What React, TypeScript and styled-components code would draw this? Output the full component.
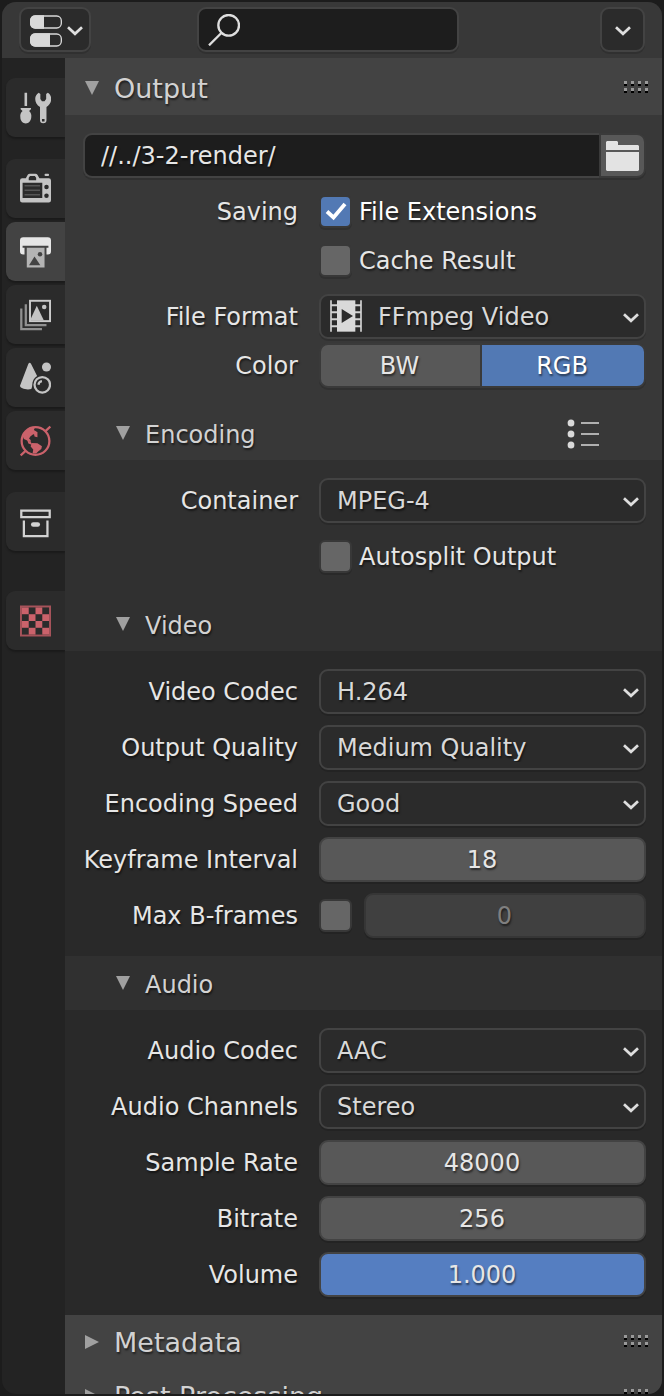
import React, { useId, useState } from "react";
import styled, { createGlobalStyle, css } from "styled-components";

const color = {
  frame: "#1c1c1c",
  nav: "#232323",
  bar: "#383838",
  panelHead: "#434343",
  level1: "#383838",
  level2: "#303030",
  level3: "#292929",
  border: "#434343",
  menu: "#2b2b2b",
  field: "#1d1d1d",
  value: "#585858",
  accent: "#5279b4",
  slider: "#557ec1",
  text: "#e6e6e6",
  muted: "#d2d2d2",
  red: "#cb626b",
};

const GlobalStyle = createGlobalStyle`
  *, *::before, *::after { box-sizing: border-box; }
  body { margin: 0; background: ${color.frame}; }
  body, button, input, select {
    font-family: "DejaVu Sans", sans-serif;
    font-size: 24px;
    color: ${color.text};
  }
`;

const textShadow = css`
  text-shadow: 1px 2px 2px rgba(0, 0, 0, 0.55);
`;

const Shell = styled.div`
  height: 100vh;
  padding: 2px;
`;

const Editor = styled.div`
  height: 100%;
  display: flex;
  flex-direction: column;
  overflow: hidden;
  border-radius: 14px;
  background: ${color.nav};
`;

const TopBar = styled.header`
  flex: none;
  display: flex;
  height: 56px;
  padding: 5px 17px 0;
  background: ${color.bar};
`;

const boxShape = css`
  height: 45px;
  border: 2px solid ${color.border};
  border-radius: 9px;
  box-shadow: 0 2px 0 rgba(0, 0, 0, 0.14);
`;

const BarButton = styled.button`
  ${boxShape}
  display: flex;
  align-items: center;
  justify-content: center;
  gap: 5px;
  min-width: 45px;
  padding: 2px 6px 0 9px;
  background: ${color.menu};
`;

const SquareButton = styled(BarButton)`
  margin-left: auto;
  padding: 2px 0 0;
`;

const SearchBox = styled.label`
  position: relative;
  width: 262px;
  margin-left: 106px;
`;

const SearchIcon = styled.span`
  position: absolute;
  left: 11px;
  top: 7px;
  display: flex;
  pointer-events: none;
`;

const SearchInput = styled.input`
  ${boxShape}
  width: 100%;
  padding: 0 12px 0 50px;
  background: ${color.field};
  outline: none;
`;

const Main = styled.div`
  flex: 1;
  min-height: 0;
  display: flex;
`;

const Nav = styled.nav`
  flex: none;
  width: 63px;
  padding: 20px 0 0 4px;
  display: flex;
  flex-direction: column;
`;

const NavTab = styled.button<{ $active?: boolean; $space?: number }>`
  flex: none;
  height: 59px;
  margin: 0 0 ${(p) => p.$space ?? 4}px;
  padding: 14px;
  display: flex;
  border: 0;
  border-radius: 9px 0 0 9px;
  background: ${(p) => (p.$active ? color.panelHead : color.menu)};
  box-shadow: 0 2px 2px rgba(0, 0, 0, 0.25);
`;

const Content = styled.main`
  flex: 1;
  min-width: 0;
  padding-top: 3px;
  overflow-y: auto;
  scrollbar-width: none;
  background: ${color.panelHead};
`;

const PanelHeader = styled.div`
  display: flex;
  align-items: center;
  height: 54px;
  padding: 0 14px 0 20px;
  background: ${color.panelHead};
`;

const SubHeader = styled(PanelHeader)<{ $bg: string }>`
  padding: 0 62px 0 51px;
  background: ${(p) => p.$bg};
`;

const Disclosure = styled.button`
  ${textShadow}
  flex: 1;
  display: flex;
  align-items: center;
  gap: 15px;
  height: 54px;
  padding: 0;
  border: 0;
  background: none;
  font-size: 27px;
  color: ${color.muted};
  white-space: nowrap;

  span {
    padding-top: 2px;
    line-height: 52px;
  }
`;

const SubDisclosure = styled(Disclosure)`
  font-size: 24px;

  span {
    padding-top: 4px;
    line-height: 50px;
  }
`;

const IconButton = styled.button`
  display: flex;
  padding: 2px 0 0;
  border: 0;
  background: none;
`;

const PanelBody = styled.div<{ $bg: string }>`
  display: flex;
  flex-direction: column;
  gap: 11px;
  padding: 18px 16px 18px 18px;
  background: ${(p) => p.$bg};
`;

const AlignedRows = styled.div`
  display: flex;
  flex-direction: column;
  gap: 4px;
`;

const Row = styled.div`
  display: grid;
  grid-template-columns: 215px minmax(0, 1fr);
  grid-template-rows: 45px;
  column-gap: 21px;
`;

const RowLabel = styled.label`
  ${textShadow}
  text-align: right;
  line-height: 47px;
  white-space: nowrap;
`;

const PathRow = styled.div`
  display: flex;
`;

const PathInput = styled.input`
  ${boxShape}
  ${textShadow}
  flex: 1;
  min-width: 0;
  padding: 0 16px;
  border-right: 0;
  border-radius: 9px 0 0 9px;
  background: ${color.field};
  outline: none;
`;

const FolderButton = styled.button`
  ${boxShape}
  width: 47px;
  padding: 2px 0 0;
  display: flex;
  align-items: center;
  justify-content: center;
  border-color: #3a3a3a;
  border-radius: 0 9px 9px 0;
  background: ${color.value};
`;

const SelectBox = styled.div`
  position: relative;
`;

const NativeSelect = styled.select<{ $icon: boolean }>`
  ${boxShape}
  ${textShadow}
  appearance: none;
  width: 100%;
  padding: 0 36px 0 ${(p) => (p.$icon ? 57 : 16)}px;
  background: ${color.menu};
  color: #d9d9d9;
  outline: none;
`;

const SelectArrow = styled.span`
  position: absolute;
  right: 7px;
  top: 19px;
  display: flex;
  pointer-events: none;
`;

const SelectIcon = styled.span`
  position: absolute;
  left: 11px;
  top: 6px;
  display: flex;
  pointer-events: none;
`;

const ValueInput = styled.input<{ $slider?: boolean }>`
  ${boxShape}
  ${textShadow}
  width: 100%;
  min-width: 0;
  padding: 0 1px 0 0;
  text-align: center;
  background: ${(p) => (p.$slider ? color.slider : color.value)};
  outline: none;

  &:disabled {
    border-color: #363636;
    background: #404040;
    color: #7f7f7f;
  }
`;

const Segments = styled.div`
  display: grid;
  grid-template-columns: 163px minmax(0, 1fr);
  height: 45px;
`;

const Segment = styled.button<{ $side: "left" | "right" }>`
  ${textShadow}
  height: 45px;
  padding: 0 2px 0 0;
  border: 2px solid #3a3a3a;
  border-left-width: ${(p) => (p.$side === "left" ? 2 : 0)}px;
  border-radius: ${(p) => (p.$side === "left" ? "9px 0 0 9px" : "0 9px 9px 0")};
  box-shadow: 0 2px 0 rgba(0, 0, 0, 0.14);
  background: ${color.value};

  &[aria-pressed="true"] {
    background: ${color.accent};
    color: #fff;
  }
`;

const CheckRow = styled.div<{ $gap: number }>`
  display: flex;
  align-items: center;
  gap: ${(p) => p.$gap}px;
`;

const CheckWrap = styled.span`
  position: relative;
  flex: none;
  display: flex;

  svg {
    position: absolute;
    inset: 2px;
    pointer-events: none;
  }
`;

const CheckInput = styled.input`
  appearance: none;
  width: 33px;
  height: 33px;
  margin: 0;
  border: 2px solid #383838;
  border-radius: 6px;
  background: #666;
  box-shadow: 0 2px 0 rgba(0, 0, 0, 0.14);

  &:checked {
    background: ${color.accent};
  }
`;

const CheckLabel = styled.label<{ $on: boolean }>`
  ${textShadow}
  padding-top: 2px;
  line-height: 43px;
  color: ${(p) => (p.$on ? "#fff" : color.text)};
`;

/* ---------- icons ---------- */

const Glyph = ({ children, size = 32 }: { children: React.ReactNode; size?: number }) => (
  <svg width={size} height={size} viewBox="0 0 96 96" fill="#c4c4c4" aria-hidden="true">
    {children}
  </svg>
);

const Chevron = () => (
  <svg width="16" height="10" viewBox="0 0 16 10" fill="none" stroke="#dedede" strokeWidth="2.7" aria-hidden="true">
    <path d="M1 1.2 L8 7.8 L15 1.2" />
  </svg>
);

const Triangle = ({ open }: { open: boolean }) => (
  <svg width="14" height="14" viewBox="0 0 14 14" fill="#a0a0a0" aria-hidden="true">
    <path d={open ? "M0 0H14L7 14Z" : "M0 0V14L14 7Z"} />
  </svg>
);

const Grip = () => (
  <svg width="24" height="14" viewBox="0 0 24 14" aria-hidden="true">
    {[0, 7].map((y) =>
      [0, 7, 14, 21].map((x) => (
        <g key={`${x}-${y}`}>
          <rect x={x} y={y} width="3" height="3" fill="#999" />
          <rect x={x} y={y + 3} width="3" height="2" fill="#000" />
        </g>
      ))
    )}
  </svg>
);

const PropertiesIcon = () => (
  <Glyph>
    <g fill="none" stroke="#d9d9d9" strokeWidth="4">
      <rect x="2" y="3" width="92" height="36" rx="14" />
      <rect x="2" y="57" width="92" height="36" rx="14" />
    </g>
    <path fill="#d9d9d9" d="M16 1H42V41H16A16 16 0 0 1 0 27V15A16 16 0 0 1 16 1ZM16 55H60V95H16A16 16 0 0 1 0 81V69A16 16 0 0 1 16 55Z" />
  </Glyph>
);

const MagnifierIcon = () => (
  <Glyph>
    <g fill="none" stroke="#dedede" strokeWidth="7">
      <circle cx="62" cy="34" r="31" />
      <path d="M40 57L3 94" />
    </g>
  </Glyph>
);

const ToolIcon = () => (
  <Glyph>
    <path d="M14 1H22V42H14ZM2 48H34V52L28 57C34 62 36 68 35 76C34 88 27 96 18 96C9 96 1 88 1 76C0 68 2 62 8 57L2 52Z" />
    <path
      fillRule="evenodd"
      d="M58 1C42 10 44 34 62 45V86Q62 95 72 95Q82 95 82 86V45C100 34 102 10 86 1L81 5V20L76 27H68L63 20V5ZM68 82H76V90H68Z"
    />
  </Glyph>
);

const RenderIcon = () => (
  <Glyph>
    <path
      fillRule="evenodd"
      d="M0 22Q0 15 7 15H18L24 4Q26 1 30 1H48Q52 1 54 4L60 15H89Q96 15 96 22V83Q96 90 89 90H7Q0 90 0 83ZM31 8L27 13V21H50V13L46 8ZM8 29V76H69V29Z"
    />
    <rect x="76" y="1" width="14" height="7" rx="3" />
    <g fill="#2b2b2b">
      <circle cx="82" cy="42" r="7" />
      <circle cx="82" cy="69" r="7" />
    </g>
    <path d="M14 38H62M14 52H62M14 66H62" stroke="#555" strokeWidth="5" />
  </Glyph>
);

const OutputIcon = () => (
  <Glyph>
    <path
      fill="#e6e6e6"
      d="M10 2H86Q96 2 96 12V46Q96 56 86 56H82V35H88V29H8V35H14V56H10Q0 56 0 46V12Q0 2 10 2Z"
    />
    <path fill="#b4b4b4" d="M21 35H76V96H21Z" />
    <path fill="#434343" d="M28 89L45 62L63 89Z" />
    <circle cx="62" cy="55" r="7" fill="#434343" />
  </Glyph>
);

const ViewLayerIcon = () => (
  <Glyph>
    <path d="M4 28V92H68M18 15V79H82" fill="none" stroke="#909090" strokeWidth="7" />
    <rect x="31" y="4" width="62" height="63" fill="none" stroke="#cacaca" strokeWidth="6" />
    <path d="M33 65V60L52 19L74 65Z" />
    <circle cx="75" cy="23" r="7" />
  </Glyph>
);

const SceneIcon = () => (
  <Glyph>
    <path d="M26 4Q30 -2 34 4L53 42C43 49 38 58 38 69Q38 76 35 82C20 86 0 80 0 72Z" />
    <circle cx="82" cy="14" r="14" />
    <circle cx="69" cy="69" r="24" fill="none" stroke="#c4c4c4" strokeWidth="7" />
    <path d="M57 69A13 13 0 0 1 68 58" fill="none" stroke="#c4c4c4" strokeWidth="7" />
  </Glyph>
);

const WorldIcon = () => (
  <Glyph>
    <g fill="none" stroke={color.red} strokeWidth="7">
      <circle cx="48" cy="48" r="43" />
      <path d="M78 18L94 3M18 78L2 93" />
    </g>
    <g fill={color.red}>
      <path d="M8 32C16 12 34 5 46 6L43 14L52 19L50 25L40 28L32 34L28 40L33 45V52L24 47L12 42Z" />
      <path d="M42 20H54V36L45 34Z" />
      <path d="M22 44L34 52L38 60L26 56Z" />
      <path d="M36 54L54 55L68 64L66 73L57 80L50 87H39L41 74L33 65Z" />
    </g>
  </Glyph>
);

const CollectionIcon = () => (
  <Glyph>
    <g fill="none" stroke="#d2d2d2" strokeWidth="7">
      <path d="M4 13H92V33H4Z" />
      <path d="M12 43V92H85V43" />
    </g>
    <rect x="34" y="49" width="28" height="14" rx="7" fill="#d2d2d2" />
  </Glyph>
);

const TextureIcon = () => (
  <Glyph>
    <rect x="3" y="3" width="90" height="90" fill="none" stroke="#a6535a" strokeWidth="6" />
    <g fill={color.red}>
      {[0, 1, 2, 3].map((r) =>
        [0, 2].map((c) => (
          <rect key={`${r}-${c}`} x={6 + (c + (r % 2)) * 21} y={6 + r * 21} width="21" height="21" />
        ))
      )}
    </g>
  </Glyph>
);

const FolderIcon = () => (
  <svg width="33" height="31" viewBox="0 0 33 31" fill="#e3e3e3" aria-hidden="true">
    <path d="M1 0H11L12 1V4H32L33 5V9H0V1ZM0 11H33V29L32 30H1L0 29Z" />
  </svg>
);

const FilmIcon = () => (
  <Glyph>
    <path d="M3 1V95M93 1V95" stroke="#d2d2d2" strokeWidth="5" />
    <path d="M3 16H93M3 37H93M3 58H93M3 79H93" stroke="#d2d2d2" strokeWidth="6" />
    <path fill="#d9d9d9" d="M21 1H76V95H21Z" />
    <path fill="#2b2b2b" d="M35 27L69 48L35 69Z" />
  </Glyph>
);

const PresetIcon = () => (
  <svg width="34" height="36" viewBox="0 0 34 36" aria-hidden="true">
    {[7, 18, 29].map((y) => (
      <g key={y}>
        <ellipse cx="5" cy={y} rx="3.4" ry="3.6" fill="#dadada" />
        <rect x="15" y={y - 1} width="18" height="2" fill="#b0b0b0" />
      </g>
    ))}
  </svg>
);

/* ---------- controls ---------- */

const Select = ({ label, options, icon }: { label: string; options: string[]; icon?: React.ReactNode }) => {
  const id = useId();
  return (
    <Row>
      <RowLabel htmlFor={id}>{label}</RowLabel>
      <SelectBox>
        <NativeSelect id={id} $icon={Boolean(icon)}>
          {options.map((o) => (
            <option key={o}>{o}</option>
          ))}
        </NativeSelect>
        {icon && <SelectIcon>{icon}</SelectIcon>}
        <SelectArrow>
          <Chevron />
        </SelectArrow>
      </SelectBox>
    </Row>
  );
};

const Value = ({ label, value, slider }: { label: string; value: string; slider?: boolean }) => {
  const id = useId();
  return (
    <Row>
      <RowLabel htmlFor={id}>{label}</RowLabel>
      <ValueInput id={id} type="text" inputMode="decimal" defaultValue={value} $slider={slider} />
    </Row>
  );
};

const Tick = ({ id, checked, onChange }: { id: string; checked: boolean; onChange: (v: boolean) => void }) => (
  <CheckWrap>
    <CheckInput id={id} type="checkbox" checked={checked} onChange={(e) => onChange(e.target.checked)} />
    {checked && (
      <svg width="29" height="29" viewBox="0 0 29 29" fill="none" stroke="#fff" strokeWidth="3.8" aria-hidden="true">
        <path d="M6 14.5L12.5 20.5L24 7" />
      </svg>
    )}
  </CheckWrap>
);

const Check = ({ heading, label, initial = false }: { heading?: string; label: string; initial?: boolean }) => {
  const id = useId();
  const [on, setOn] = useState(initial);
  return (
    <Row>
      <RowLabel as="span">{heading}</RowLabel>
      <CheckRow $gap={7}>
        <Tick id={id} checked={on} onChange={setOn} />
        <CheckLabel htmlFor={id} $on={on}>
          {label}
        </CheckLabel>
      </CheckRow>
    </Row>
  );
};

const MaxBFrames = () => {
  const id = useId();
  const [on, setOn] = useState(false);
  return (
    <Row>
      <RowLabel htmlFor={id}>Max B-frames</RowLabel>
      <CheckRow $gap={12}>
        <Tick id={id} checked={on} onChange={setOn} />
        <ValueInput type="text" aria-label="Max B-frames value" defaultValue="0" disabled={!on} />
      </CheckRow>
    </Row>
  );
};

const ColorMode = () => {
  const [mode, setMode] = useState("RGB");
  return (
    <Row>
      <RowLabel as="span" id="color-mode">
        Color
      </RowLabel>
      <Segments role="group" aria-labelledby="color-mode">
        <Segment $side="left" aria-pressed={mode === "BW"} onClick={() => setMode("BW")}>
          BW
        </Segment>
        <Segment $side="right" aria-pressed={mode === "RGB"} onClick={() => setMode("RGB")}>
          RGB
        </Segment>
      </Segments>
    </Row>
  );
};

const Header = ({ title, open = false }: { title: string; open?: boolean }) => (
  <PanelHeader>
    <Disclosure aria-expanded={open}>
      <Triangle open={open} />
      <span>{title}</span>
    </Disclosure>
    <Grip />
  </PanelHeader>
);

const SubPanelHeader = ({ title, bg, children }: { title: string; bg: string; children?: React.ReactNode }) => (
  <SubHeader $bg={bg}>
    <SubDisclosure aria-expanded>
      <Triangle open />
      <span>{title}</span>
    </SubDisclosure>
    {children}
  </SubHeader>
);

const tabs = [
  { name: "Tool", icon: <ToolIcon />, space: 22 },
  { name: "Render", icon: <RenderIcon /> },
  { name: "Output", icon: <OutputIcon />, active: true },
  { name: "View Layer", icon: <ViewLayerIcon /> },
  { name: "Scene", icon: <SceneIcon /> },
  { name: "World", icon: <WorldIcon />, space: 22 },
  { name: "Collection", icon: <CollectionIcon />, space: 40 },
  { name: "Texture", icon: <TextureIcon /> },
];

export default function App() {
  return (
    <>
      <GlobalStyle />
      <Shell>
        <Editor>
          <TopBar>
            <BarButton aria-label="Editor type">
              <PropertiesIcon />
              <Chevron />
            </BarButton>
            <SearchBox>
              <SearchInput type="text" aria-label="Search" />
              <SearchIcon>
                <MagnifierIcon />
              </SearchIcon>
            </SearchBox>
            <SquareButton aria-label="Options">
              <Chevron />
            </SquareButton>
          </TopBar>
          <Main>
            <Nav>
              {tabs.map((t) => (
                <NavTab key={t.name} aria-label={t.name} $active={t.active} $space={t.space}>
                  {t.icon}
                </NavTab>
              ))}
            </Nav>
            <Content>
              <Header title="Output" open />
              <PanelBody $bg={color.level1}>
                <PathRow>
                  <PathInput type="text" aria-label="Output path" defaultValue="//../3-2-render/" />
                  <FolderButton aria-label="Browse">
                    <FolderIcon />
                  </FolderButton>
                </PathRow>
                <AlignedRows>
                  <Check heading="Saving" label="File Extensions" initial />
                  <Check label="Cache Result" />
                </AlignedRows>
                <AlignedRows>
                  <Select label="File Format" options={["FFmpeg Video"]} icon={<FilmIcon />} />
                  <ColorMode />
                </AlignedRows>
              </PanelBody>

              <SubPanelHeader title="Encoding" bg={color.level1}>
                <IconButton aria-label="Presets">
                  <PresetIcon />
                </IconButton>
              </SubPanelHeader>
              <PanelBody $bg={color.level2}>
                <Select label="Container" options={["MPEG-4"]} />
                <Check label="Autosplit Output" />
              </PanelBody>

              <SubPanelHeader title="Video" bg={color.level2} />
              <PanelBody $bg={color.level3}>
                <Select label="Video Codec" options={["H.264"]} />
                <Select label="Output Quality" options={["Medium Quality"]} />
                <Select label="Encoding Speed" options={["Good"]} />
                <Value label="Keyframe Interval" value="18" />
                <MaxBFrames />
              </PanelBody>

              <SubPanelHeader title="Audio" bg={color.level2} />
              <PanelBody $bg={color.level3}>
                <Select label="Audio Codec" options={["AAC"]} />
                <Select label="Audio Channels" options={["Stereo"]} />
                <Value label="Sample Rate" value="48000" />
                <Value label="Bitrate" value="256" />
                <Value label="Volume" value="1.000" slider />
              </PanelBody>

              <Header title="Metadata" />
              <Header title="Post Processing" />
            </Content>
          </Main>
        </Editor>
      </Shell>
    </>
  );
}
